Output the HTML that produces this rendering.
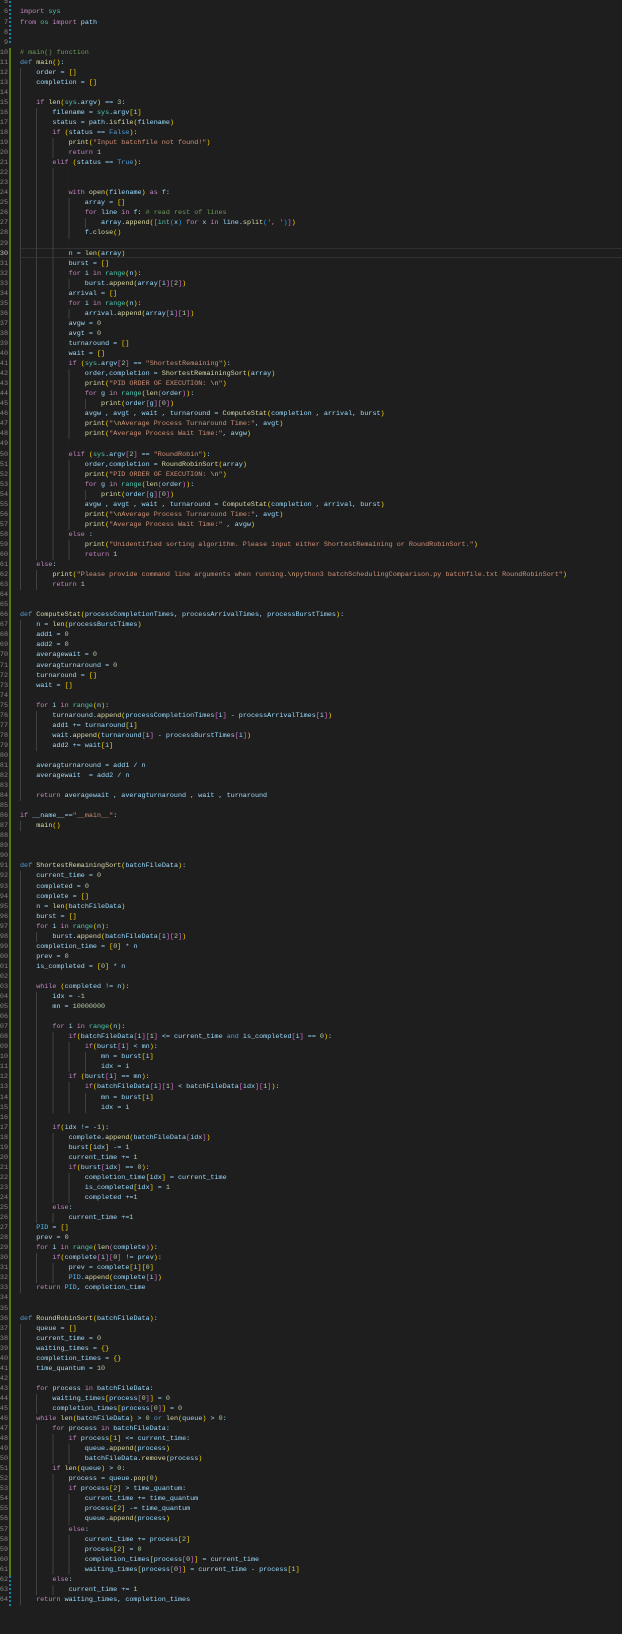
<!DOCTYPE html>
<html><head><meta charset="utf-8"><style>
html,body{margin:0;padding:0;background:#1e1e1e;width:622px;height:1634px;overflow:hidden}
body{position:relative;font-family:"Liberation Mono",monospace;font-size:6.75px}
#nums{position:absolute;left:-20px;top:-2.6px;width:28px;text-align:right;color:#858585;line-height:10.05px}
#nums div{height:10.05px}
#code{position:absolute;left:20px;top:-2.6px;width:602px;color:#9cdcfe;line-height:10.05px}
#code div{height:10.05px;white-space:pre;background-image:repeating-linear-gradient(to right,#404040 0 1px,transparent 1px 16.2px);background-repeat:no-repeat;background-size:0 100%}
#code .L1{background-size:16.2px 100%}#code .L2{background-size:32.4px 100%}#code .L3{background-size:48.6px 100%}#code .L4{background-size:64.8px 100%}#code .L5{background-size:81px 100%}
k{color:#c586c0}d{color:#569cd6}f{color:#dcdcaa}n{color:#b5cea8}c{color:#6a9955}t{color:#4ec9b0}y{color:#ffd700}m{color:#da70d6}j{color:#179fff}e{color:#d7ba7d}z{color:#ce9178}w{color:#4fc1ff}
#bar1{position:absolute;left:9px;top:-3px;width:2px;height:48px;background:repeating-linear-gradient(#1b81a8 0 2px,transparent 2px 4px)}
#bar2{position:absolute;left:9px;top:48px;width:2px;height:1530px;background:#587c0c}
#bar3{position:absolute;left:9px;top:1576px;width:2px;height:30px;background:repeating-linear-gradient(#1b81a8 0 2px,transparent 2px 4px)}
#cur{position:absolute;left:20px;top:248px;width:602px;height:8px;border:1px solid #303030}
</style></head><body>
<div id="bar1"></div><div id="bar2"></div><div id="bar3"></div>
<div id="cur"></div>
<div id="nums">
<div>5</div><div>6</div><div>7</div><div>8</div><div>9</div><div>10</div><div>11</div><div>12</div><div>13</div><div>14</div><div>15</div><div>16</div><div>17</div><div>18</div><div>19</div><div>20</div><div>21</div><div>22</div><div>23</div><div>24</div><div>25</div><div>26</div><div>27</div><div>28</div><div>29</div><div style="color:#c6c6c6">30</div><div>31</div><div>32</div><div>33</div><div>34</div><div>35</div><div>36</div><div>37</div><div>38</div><div>39</div><div>40</div><div>41</div><div>42</div><div>43</div><div>44</div><div>45</div><div>46</div><div>47</div><div>48</div><div>49</div><div>50</div><div>51</div><div>52</div><div>53</div><div>54</div><div>55</div><div>56</div><div>57</div><div>58</div><div>59</div><div>60</div><div>61</div><div>62</div><div>63</div><div>64</div><div>65</div><div>66</div><div>67</div><div>68</div><div>69</div><div>70</div><div>71</div><div>72</div><div>73</div><div>74</div><div>75</div><div>76</div><div>77</div><div>78</div><div>79</div><div>80</div><div>81</div><div>82</div><div>83</div><div>84</div><div>85</div><div>86</div><div>87</div><div>88</div><div>89</div><div>90</div><div>91</div><div>92</div><div>93</div><div>94</div><div>95</div><div>96</div><div>97</div><div>98</div><div>99</div><div>100</div><div>101</div><div>102</div><div>103</div><div>104</div><div>105</div><div>106</div><div>107</div><div>108</div><div>109</div><div>110</div><div>111</div><div>112</div><div>113</div><div>114</div><div>115</div><div>116</div><div>117</div><div>118</div><div>119</div><div>120</div><div>121</div><div>122</div><div>123</div><div>124</div><div>125</div><div>126</div><div>127</div><div>128</div><div>129</div><div>130</div><div>131</div><div>132</div><div>133</div><div>134</div><div>135</div><div>136</div><div>137</div><div>138</div><div>139</div><div>140</div><div>141</div><div>142</div><div>143</div><div>144</div><div>145</div><div>146</div><div>147</div><div>148</div><div>149</div><div>150</div><div>151</div><div>152</div><div>153</div><div>154</div><div>155</div><div>156</div><div>157</div><div>158</div><div>159</div><div>160</div><div>161</div><div>162</div><div>163</div><div>164</div>
</div>
<div id="code">
<div> </div>
<div><k>import</k> <t>sys</t></div>
<div><k>from</k> <t>os</t> <k>import</k> path</div>
<div> </div>
<div> </div>
<div><c># main() function</c></div>
<div><d>def</d> <f>main</f><y>()</y>:</div>
<div class="L1">    order = <y>[]</y></div>
<div class="L1">    completion = <y>[]</y></div>
<div class="L1"> </div>
<div class="L1">    <k>if</k> <f>len</f><y>(</y><t>sys</t>.argv<y>)</y> == <n>3</n>:</div>
<div class="L2">        filename = <t>sys</t>.argv<y>[</y><n>1</n><y>]</y></div>
<div class="L2">        status = path.<f>isfile</f><y>(</y>filename<y>)</y></div>
<div class="L2">        <k>if</k> <y>(</y>status == <d>False</d><y>)</y>:</div>
<div class="L3">            <f>print</f><y>(</y><z>"Input batchfile not found!"</z><y>)</y></div>
<div class="L3">            <k>return</k> <n>1</n></div>
<div class="L2">        <k>elif</k> <y>(</y>status == <d>True</d><y>)</y>:</div>
<div class="L3"> </div>
<div class="L3"> </div>
<div class="L3">            <k>with</k> <f>open</f><y>(</y>filename<y>)</y> <k>as</k> f:</div>
<div class="L4">                array = <y>[]</y></div>
<div class="L4">                <k>for</k> line <k>in</k> f: <c># read rest of lines</c></div>
<div class="L5">                    array.<f>append</f><y>(</y><m>[</m><t>int</t><j>(</j>x<j>)</j> <k>for</k> x <k>in</k> line.<f>split</f><j>(</j><z>', '</z><j>)</j><m>]</m><y>)</y></div>
<div class="L4">                f.<f>close</f><y>()</y></div>
<div class="L3"> </div>
<div class="L3">            n = <f>len</f><y>(</y>array<y>)</y></div>
<div class="L3">            burst = <y>[]</y></div>
<div class="L3">            <k>for</k> i <k>in</k> <t>range</t><y>(</y>n<y>)</y>:</div>
<div class="L4">                burst.<f>append</f><y>(</y>array<m>[</m>i<m>]</m><m>[</m><n>2</n><m>]</m><y>)</y></div>
<div class="L3">            arrival = <y>[]</y></div>
<div class="L3">            <k>for</k> i <k>in</k> <t>range</t><y>(</y>n<y>)</y>:</div>
<div class="L4">                arrival.<f>append</f><y>(</y>array<m>[</m>i<m>]</m><m>[</m><n>1</n><m>]</m><y>)</y></div>
<div class="L3">            avgw = <n>0</n></div>
<div class="L3">            avgt = <n>0</n></div>
<div class="L3">            turnaround = <y>[]</y></div>
<div class="L3">            wait = <y>[]</y></div>
<div class="L3">            <k>if</k> <y>(</y><t>sys</t>.argv<m>[</m><n>2</n><m>]</m> == <z>"ShortestRemaining"</z><y>)</y>:</div>
<div class="L4">                order,completion = <f>ShortestRemainingSort</f><y>(</y>array<y>)</y></div>
<div class="L4">                <f>print</f><y>(</y><z>"PID ORDER OF EXECUTION: <e>\n</e>"</z><y>)</y></div>
<div class="L4">                <k>for</k> g <k>in</k> <t>range</t><y>(</y><f>len</f><m>(</m>order<m>)</m><y>)</y>:</div>
<div class="L5">                    <f>print</f><y>(</y>order<m>[</m>g<m>]</m><m>[</m><n>0</n><m>]</m><y>)</y></div>
<div class="L4">                avgw , avgt , wait , turnaround = <f>ComputeStat</f><y>(</y>completion , arrival, burst<y>)</y></div>
<div class="L4">                <f>print</f><y>(</y><z>"<e>\n</e>Average Process Turnaround Time:"</z>, avgt<y>)</y></div>
<div class="L4">                <f>print</f><y>(</y><z>"Average Process Wait Time:"</z>, avgw<y>)</y></div>
<div class="L3"> </div>
<div class="L3">            <k>elif</k> <y>(</y><t>sys</t>.argv<m>[</m><n>2</n><m>]</m> == <z>"RoundRobin"</z><y>)</y>:</div>
<div class="L4">                order,completion = <f>RoundRobinSort</f><y>(</y>array<y>)</y></div>
<div class="L4">                <f>print</f><y>(</y><z>"PID ORDER OF EXECUTION: <e>\n</e>"</z><y>)</y></div>
<div class="L4">                <k>for</k> g <k>in</k> <t>range</t><y>(</y><f>len</f><m>(</m>order<m>)</m><y>)</y>:</div>
<div class="L5">                    <f>print</f><y>(</y>order<m>[</m>g<m>]</m><m>[</m><n>0</n><m>]</m><y>)</y></div>
<div class="L4">                avgw , avgt , wait , turnaround = <f>ComputeStat</f><y>(</y>completion , arrival, burst<y>)</y></div>
<div class="L4">                <f>print</f><y>(</y><z>"<e>\n</e>Average Process Turnaround Time:"</z>, avgt<y>)</y></div>
<div class="L4">                <f>print</f><y>(</y><z>"Average Process Wait Time:"</z> , avgw<y>)</y></div>
<div class="L3">            <k>else</k> :</div>
<div class="L4">                <f>print</f><y>(</y><z>"Unidentified sorting algorithm. Please input either ShortestRemaining or RoundRobinSort."</z><y>)</y></div>
<div class="L4">                <k>return</k> <n>1</n></div>
<div class="L1">    <k>else</k>:</div>
<div class="L2">        <f>print</f><y>(</y><z>"Please provide command line arguments when running.<e>\n</e>python3 batchSchedulingComparison.py batchfile.txt RoundRobinSort"</z><y>)</y></div>
<div class="L2">        <k>return</k> <n>1</n></div>
<div> </div>
<div> </div>
<div><d>def</d> <f>ComputeStat</f><y>(</y>processCompletionTimes, processArrivalTimes, processBurstTimes<y>)</y>:</div>
<div class="L1">    n = <f>len</f><y>(</y>processBurstTimes<y>)</y></div>
<div class="L1">    add1 = <n>0</n></div>
<div class="L1">    add2 = <n>0</n></div>
<div class="L1">    averagewait = <n>0</n></div>
<div class="L1">    averagturnaround = <n>0</n></div>
<div class="L1">    turnaround = <y>[]</y></div>
<div class="L1">    wait = <y>[]</y></div>
<div class="L1"> </div>
<div class="L1">    <k>for</k> i <k>in</k> <t>range</t><y>(</y>n<y>)</y>:</div>
<div class="L2">        turnaround.<f>append</f><y>(</y>processCompletionTimes<m>[</m>i<m>]</m> - processArrivalTimes<m>[</m>i<m>]</m><y>)</y></div>
<div class="L2">        add1 += turnaround<y>[</y>i<y>]</y></div>
<div class="L2">        wait.<f>append</f><y>(</y>turnaround<m>[</m>i<m>]</m> - processBurstTimes<m>[</m>i<m>]</m><y>)</y></div>
<div class="L2">        add2 += wait<y>[</y>i<y>]</y></div>
<div class="L1"> </div>
<div class="L1">    averagturnaround = add1 / n</div>
<div class="L1">    averagewait  = add2 / n</div>
<div class="L1"> </div>
<div class="L1">    <k>return</k> averagewait , averagturnaround , wait , turnaround</div>
<div> </div>
<div><k>if</k> __name__==<z>"__main__"</z>:</div>
<div class="L1">    <f>main</f><y>()</y></div>
<div> </div>
<div> </div>
<div> </div>
<div><d>def</d> <f>ShortestRemainingSort</f><y>(</y>batchFileData<y>)</y>:</div>
<div class="L1">    current_time = <n>0</n></div>
<div class="L1">    completed = <n>0</n></div>
<div class="L1">    complete = <y>[]</y></div>
<div class="L1">    n = <f>len</f><y>(</y>batchFileData<y>)</y></div>
<div class="L1">    burst = <y>[]</y></div>
<div class="L1">    <k>for</k> i <k>in</k> <t>range</t><y>(</y>n<y>)</y>:</div>
<div class="L2">        burst.<f>append</f><y>(</y>batchFileData<m>[</m>i<m>]</m><m>[</m><n>2</n><m>]</m><y>)</y></div>
<div class="L1">    completion_time = <y>[</y><n>0</n><y>]</y> * n</div>
<div class="L1">    prev = <n>0</n></div>
<div class="L1">    is_completed = <y>[</y><n>0</n><y>]</y> * n</div>
<div class="L1"> </div>
<div class="L1">    <k>while</k> <y>(</y>completed != n<y>)</y>:</div>
<div class="L2">        idx = -<n>1</n></div>
<div class="L2">        mn = <n>10000000</n></div>
<div class="L2"> </div>
<div class="L2">        <k>for</k> i <k>in</k> <t>range</t><y>(</y>n<y>)</y>:</div>
<div class="L3">            <k>if</k><y>(</y>batchFileData<m>[</m>i<m>]</m><m>[</m><n>1</n><m>]</m> &lt;= current_time <d>and</d> is_completed<m>[</m>i<m>]</m> == <n>0</n><y>)</y>:</div>
<div class="L4">                <k>if</k><y>(</y>burst<m>[</m>i<m>]</m> &lt; mn<y>)</y>:</div>
<div class="L5">                    mn = burst<y>[</y>i<y>]</y></div>
<div class="L5">                    idx = i</div>
<div class="L3">            <k>if</k> <y>(</y>burst<m>[</m>i<m>]</m> == mn<y>)</y>:</div>
<div class="L4">                <k>if</k><y>(</y>batchFileData<m>[</m>i<m>]</m><m>[</m><n>1</n><m>]</m> &lt; batchFileData<m>[</m>idx<m>]</m><m>[</m><n>1</n><m>]</m><y>)</y>:</div>
<div class="L5">                    mn = burst<y>[</y>i<y>]</y></div>
<div class="L5">                    idx = i</div>
<div class="L2"> </div>
<div class="L2">        <k>if</k><y>(</y>idx != -<n>1</n><y>)</y>:</div>
<div class="L3">            complete.<f>append</f><y>(</y>batchFileData<m>[</m>idx<m>]</m><y>)</y></div>
<div class="L3">            burst<y>[</y>idx<y>]</y> -= <n>1</n></div>
<div class="L3">            current_time += <n>1</n></div>
<div class="L3">            <k>if</k><y>(</y>burst<m>[</m>idx<m>]</m> == <n>0</n><y>)</y>:</div>
<div class="L4">                completion_time<y>[</y>idx<y>]</y> = current_time</div>
<div class="L4">                is_completed<y>[</y>idx<y>]</y> = <n>1</n></div>
<div class="L4">                completed +=<n>1</n></div>
<div class="L2">        <k>else</k>:</div>
<div class="L3">            current_time +=<n>1</n></div>
<div class="L1">    <w>PID</w> = <y>[]</y></div>
<div class="L1">    prev = <n>0</n></div>
<div class="L1">    <k>for</k> i <k>in</k> <t>range</t><y>(</y><f>len</f><m>(</m>complete<m>)</m><y>)</y>:</div>
<div class="L2">        <k>if</k><y>(</y>complete<m>[</m>i<m>]</m><m>[</m><n>0</n><m>]</m> != prev<y>)</y>:</div>
<div class="L3">            prev = complete<y>[</y>i<y>]</y><y>[</y><n>0</n><y>]</y></div>
<div class="L3">            <w>PID</w>.<f>append</f><y>(</y>complete<m>[</m>i<m>]</m><y>)</y></div>
<div class="L1">    <k>return</k> <w>PID</w>, completion_time</div>
<div> </div>
<div> </div>
<div><d>def</d> <f>RoundRobinSort</f><y>(</y>batchFileData<y>)</y>:</div>
<div class="L1">    queue = <y>[]</y></div>
<div class="L1">    current_time = <n>0</n></div>
<div class="L1">    waiting_times = <y>{}</y></div>
<div class="L1">    completion_times = <y>{}</y></div>
<div class="L1">    time_quantum = <n>10</n></div>
<div class="L1"> </div>
<div class="L1">    <k>for</k> process <k>in</k> batchFileData:</div>
<div class="L2">        waiting_times<y>[</y>process<m>[</m><n>0</n><m>]</m><y>]</y> = <n>0</n></div>
<div class="L2">        completion_times<y>[</y>process<m>[</m><n>0</n><m>]</m><y>]</y> = <n>0</n></div>
<div class="L1">    <k>while</k> <f>len</f><y>(</y>batchFileData<y>)</y> &gt; <n>0</n> <d>or</d> <f>len</f><y>(</y>queue<y>)</y> &gt; <n>0</n>:</div>
<div class="L2">        <k>for</k> process <k>in</k> batchFileData:</div>
<div class="L3">            <k>if</k> process<y>[</y><n>1</n><y>]</y> &lt;= current_time:</div>
<div class="L4">                queue.<f>append</f><y>(</y>process<y>)</y></div>
<div class="L4">                batchFileData.<f>remove</f><y>(</y>process<y>)</y></div>
<div class="L2">        <k>if</k> <f>len</f><y>(</y>queue<y>)</y> &gt; <n>0</n>:</div>
<div class="L3">            process = queue.<f>pop</f><y>(</y><n>0</n><y>)</y></div>
<div class="L3">            <k>if</k> process<y>[</y><n>2</n><y>]</y> &gt; time_quantum:</div>
<div class="L4">                current_time += time_quantum</div>
<div class="L4">                process<y>[</y><n>2</n><y>]</y> -= time_quantum</div>
<div class="L4">                queue.<f>append</f><y>(</y>process<y>)</y></div>
<div class="L3">            <k>else</k>:</div>
<div class="L4">                current_time += process<y>[</y><n>2</n><y>]</y></div>
<div class="L4">                process<y>[</y><n>2</n><y>]</y> = <n>0</n></div>
<div class="L4">                completion_times<y>[</y>process<m>[</m><n>0</n><m>]</m><y>]</y> = current_time</div>
<div class="L4">                waiting_times<y>[</y>process<m>[</m><n>0</n><m>]</m><y>]</y> = current_time - process<y>[</y><n>1</n><y>]</y></div>
<div class="L2">        <k>else</k>:</div>
<div class="L3">            current_time += <n>1</n></div>
<div class="L1">    <k>return</k> waiting_times, completion_times</div>
</div>
</body></html>
